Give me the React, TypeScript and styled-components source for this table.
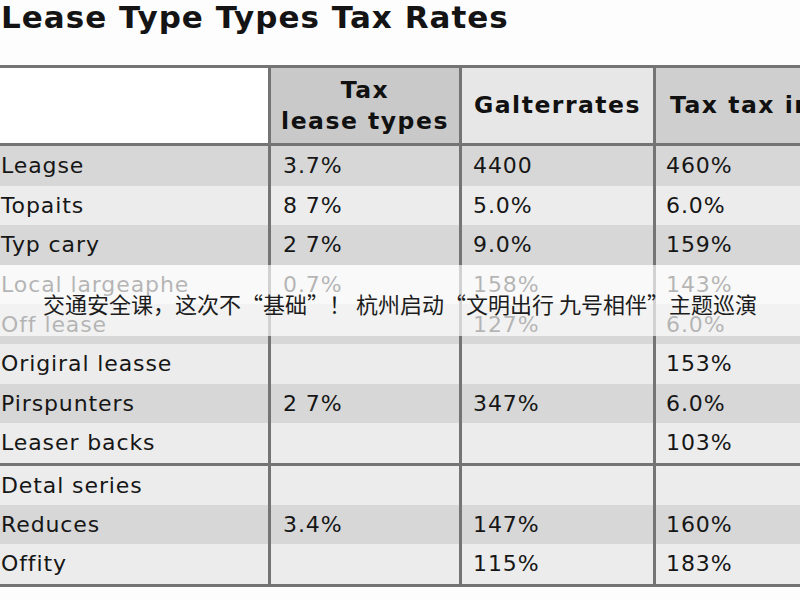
import React from "react";
import styled, { createGlobalStyle } from "styled-components";

const Global = createGlobalStyle`
  html, body { margin: 0; padding: 0; background: #ffffff; }
  body { width: 800px; height: 600px; overflow: hidden; }
`;

const Page = styled.div`
  position: relative;
  width: 800px;
  height: 600px;
  overflow: hidden;
  background: #fdfdfd;
  font-family: "DejaVu Sans", "Liberation Sans", sans-serif;
  color: #161616;
`;

const Title = styled.h1`
  margin: 0;
  padding: 0 0 0 1px;
  height: 65px;
  font-size: 31px;
  line-height: 35px;
  font-weight: 700;
  letter-spacing: 1px;
  color: #141414;
  white-space: nowrap;
`;

const Table = styled.div`
  width: 960px;
  display: flex;
  flex-direction: column;
  border-top: 3px solid #747474;
  border-bottom: 3px solid #747474;
`;

const HeaderRow = styled.div`
  display: flex;
  height: 75px;
  border-bottom: 3px solid #747474;
`;

const Group = styled.div<{ $last?: boolean }>`
  display: flex;
  flex-direction: column;
  border-bottom: ${(p) => (p.$last ? "none" : "3px solid #747474")};
`;

const Row = styled.div<{ $dark: boolean; $h: number }>`
  display: flex;
  height: ${(p) => p.$h}px;
  background: ${(p) => (p.$dark ? "#d7d7d7" : "#ececec")};
`;

const widths = [268, 191, 194, 307];
const pads = [1, 12, 11, 10];

const Cell = styled.div<{ $col: number }>`
  box-sizing: border-box;
  width: ${(p) => widths[p.$col]}px;
  flex: none;
  display: flex;
  align-items: center;
  padding-left: ${(p) => pads[p.$col]}px;
  border-left: ${(p) => (p.$col === 0 ? "none" : "3px solid #747474")};
  font-size: 22px;
  letter-spacing: 0.9px;
  white-space: nowrap;
  overflow: hidden;
`;

const headBgs = ["#ffffff", "#c9c9c9", "#e7e7e7", "#cfcfcf"];

const HeadCell = styled.div<{ $col: number; $align: "center" | "left" }>`
  box-sizing: border-box;
  width: ${(p) => widths[p.$col]}px;
  flex: none;
  display: flex;
  align-items: center;
  justify-content: ${(p) => (p.$align === "center" ? "center" : "flex-start")};
  text-align: ${(p) => p.$align};
  padding-left: ${(p) => (p.$align === "center" ? 0 : 14)}px;
  background: ${(p) => headBgs[p.$col]};
  border-left: ${(p) => (p.$col === 0 ? "none" : "3px solid #747474")};
  font-size: 23.5px;
  line-height: 31px;
  font-weight: 700;
  letter-spacing: 1.5px;
  white-space: nowrap;
  overflow: hidden;
  color: #111;
`;

const CaptionBand = styled.div`
  position: absolute;
  left: 0;
  top: 265px;
  width: 800px;
  height: 71px;
  background: rgba(255, 255, 255, 0.68);
  display: flex;
  align-items: center;
  justify-content: center;
`;

const Caption = styled.span`
  font-family: "Noto Sans CJK SC", "Noto Sans", sans-serif;
  font-size: 22px;
  font-weight: 400;
  color: #1c1c1c;
  white-space: nowrap;
  margin-top: 4px;
`;

type R = [string, string, string, string];

const group1: R[] = [
  ["Leagse", "3.7%", "4400", "460%"],
  ["Topaits", "8 7%", "5.0%", "6.0%"],
  ["Typ cary", "2 7%", "9.0%", "159%"],
  ["Local largeaphe", "0.7%", "158%", "143%"],
  ["Off lease", "", "127%", "6.0%"],
  ["Origiral leasse", "", "", "153%"],
  ["Pirspunters", "2 7%", "347%", "6.0%"],
  ["Leaser backs", "", "", "103%"],
];

const group2: R[] = [
  ["Detal series", "", "", ""],
  ["Reduces", "3.4%", "147%", "160%"],
  ["Offity", "", "115%", "183%"],
];

function Rows({ data, h, startDark }: { data: R[]; h: number; startDark: boolean }) {
  return (
    <>
      {data.map((r, i) => (
        <Row key={i} $dark={startDark ? i % 2 === 0 : i % 2 === 1} $h={h}>
          {r.map((c, j) => (
            <Cell key={j} $col={j}>
              {c}
            </Cell>
          ))}
        </Row>
      ))}
    </>
  );
}

export default function App() {
  return (
    <Page>
      <Global />
      <Title>Lease Type Types Tax Rates</Title>
      <Table>
        <HeaderRow>
          <HeadCell $col={0} $align="left" />
          <HeadCell $col={1} $align="center">
            Tax
            <br />
            lease types
          </HeadCell>
          <HeadCell $col={2} $align="center">
            Galterrates
          </HeadCell>
          <HeadCell $col={3} $align="left">
            Tax tax income
          </HeadCell>
        </HeaderRow>
        <Group>
          <Rows data={group1} h={39.6} startDark={true} />
        </Group>
        <Group $last>
          <Rows data={group2} h={39.3} startDark={false} />
        </Group>
      </Table>
      <CaptionBand>
        <Caption>交通安全课，这次不“基础”！ 杭州启动“文明出行 九号相伴”主题巡演</Caption>
      </CaptionBand>
    </Page>
  );
}
